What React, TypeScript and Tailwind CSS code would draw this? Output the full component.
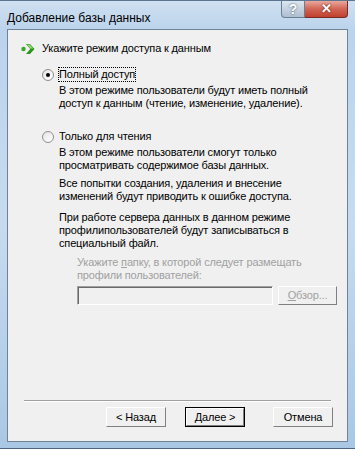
import React from 'react';

const font = { fontFamily: '"Liberation Sans", Arial, sans-serif' };

function GreenArrow() {
  return (
    <svg width="14" height="12" viewBox="0 0 14 12">
      <circle cx="2.5" cy="6" r="2.2" fill="#3aa82a" />
      <path d="M5 1 L9 1 L13.5 6 L9 11 L5 11 L9.3 6 Z" fill="#28961a" />
      <path d="M6 1.6 L8.6 1.6 L12.3 5.6 L9.4 5.6 Z" fill="#8fdc6f" />
    </svg>
  );
}

function Radio({ checked }: { checked?: boolean }) {
  return (
    <span className="w-[12px] h-[12px] rounded-full border border-[#8f8f8f] bg-gradient-to-br from-[#e4e4e4] to-white flex items-center justify-center shrink-0">
      {checked && <span className="w-[4px] h-[4px] rounded-full bg-black" />}
    </span>
  );
}

function Btn({ children, def }: { children: React.ReactNode; def?: boolean }) {
  return (
    <div className={`h-[20px] w-[60px] flex items-center justify-center text-[11px] text-black bg-[#f0f0f0] ${def ? 'border border-black' : ''}`}>
      <div className="w-full h-full flex items-center justify-center border-t border-l border-white border-r border-b border-r-[#808080] border-b-[#808080]">
        {children}
      </div>
    </div>
  );
}

export default function App() {
  return (
    <div
      className="w-[355px] h-[449px] flex flex-col bg-gradient-to-b from-[#b9d3ec] via-[#c6dbef] to-[#a9c7e4] overflow-hidden"
      style={font}
    >
      <div className="h-[29px] flex items-start justify-between shrink-0 bg-gradient-to-b from-[#cfe0f1] to-[#bcd4ec] border-t border-[#5c7690]">
        <span className="mt-[8px] ml-[7px] text-[12px] text-black">Добавление базы данных</span>
        <div className="flex mr-[7px]">
          <div className="w-[24px] h-[17px] rounded-bl-[4px] border border-t-0 border-[#6b7f94] bg-gradient-to-b from-[#dbe6f1] to-[#aebfd1] flex items-center justify-center text-white text-[14px] font-bold [text-shadow:0_0_2px_#3a4a5a]">
            ?
          </div>
          <div className="w-[43px] h-[17px] rounded-br-[4px] border border-t-0 border-l-0 border-[#7a2a22] bg-gradient-to-b from-[#e9a89c] via-[#d06454] to-[#c0402e] flex items-center justify-center text-white text-[13px] font-bold [text-shadow:0_0_2px_#5a1010]">
            ✕
          </div>
        </div>
      </div>

      <div className="flex-1 flex min-h-0">
        <div className="w-[7px] shrink-0" />
        <div className="flex-1 border border-[#6f8296] bg-[#f0f0f0] flex flex-col text-[11px] leading-[13px] text-black tracking-[-0.15px]">
          <div className="flex items-center mt-[12px] h-[13px]">
            <span className="ml-[13px] w-[21px]"><GreenArrow /></span>
            <span>Укажите режим доступа к данным</span>
          </div>

          <div className="flex items-center mt-[12px] ml-[34px] h-[15px]">
            <Radio checked />
            <span className="ml-[4px] border border-dotted border-black px-0 leading-[13px]">Полный доступ</span>
          </div>
          <div className="ml-[51px] mt-[2px]">
            <div>В этом режиме пользователи будут иметь полный</div>
            <div>доступ к данным (чтение, изменение, удаление).</div>
          </div>

          <div className="flex items-center mt-[19px] ml-[34px] h-[15px]">
            <Radio />
            <span className="ml-[5px]">Только для чтения</span>
          </div>
          <div className="ml-[51px] mt-[2px]">
            <div>В этом режиме пользователи смогут только</div>
            <div>просматривать содержимое базы данных.</div>
          </div>
          <div className="ml-[51px] mt-[5px]">
            <div>Все попытки создания, удаления и внесение</div>
            <div>изменений будут приводить к ошибке доступа.</div>
          </div>
          <div className="ml-[51px] mt-[8px]">
            <div>При работе сервера данных в данном режиме</div>
            <div>профилипользователей будут записываться в</div>
            <div>специальный файл.</div>
          </div>
          <div className="ml-[69px] mt-[6px] text-[#a0a0a0]">
            <div>Укажите <span className="underline">п</span>апку, в которой следует размещать</div>
            <div>профили пользователей:</div>
          </div>
          <div className="ml-[69px] mt-[4px] flex items-center gap-[5px]">
            <div className="w-[196px] h-[19px] bg-[#f0f0f0] border border-t-[#a0a0a0] border-l-[#a0a0a0] border-r-white border-b-white shadow-[inset_1px_1px_0_#696969]" />
            <div className="w-[59px] h-[19px] flex items-center justify-center text-[#a0a0a0] border border-t-white border-l-white border-r-[#808080] border-b-[#808080]">
              <span><span className="underline">О</span>бзор...</span>
            </div>
          </div>

          <div className="flex-1" />
          <div className="mx-[16px] border-t border-[#a0a0a0] border-b border-b-white" />
          <div className="flex mt-[5px] mb-[14px] mr-[14px] justify-end">
            <div className="mr-[19px]"><Btn>&lt; Назад</Btn></div>
            <div className="mr-[28px]"><Btn def>Далее &gt;</Btn></div>
            <Btn>Отмена</Btn>
          </div>
        </div>
        <div className="w-[7px] shrink-0" />
      </div>
      <div className="h-[7px] shrink-0 border-b border-[#4d6680]" />
    </div>
  );
}
